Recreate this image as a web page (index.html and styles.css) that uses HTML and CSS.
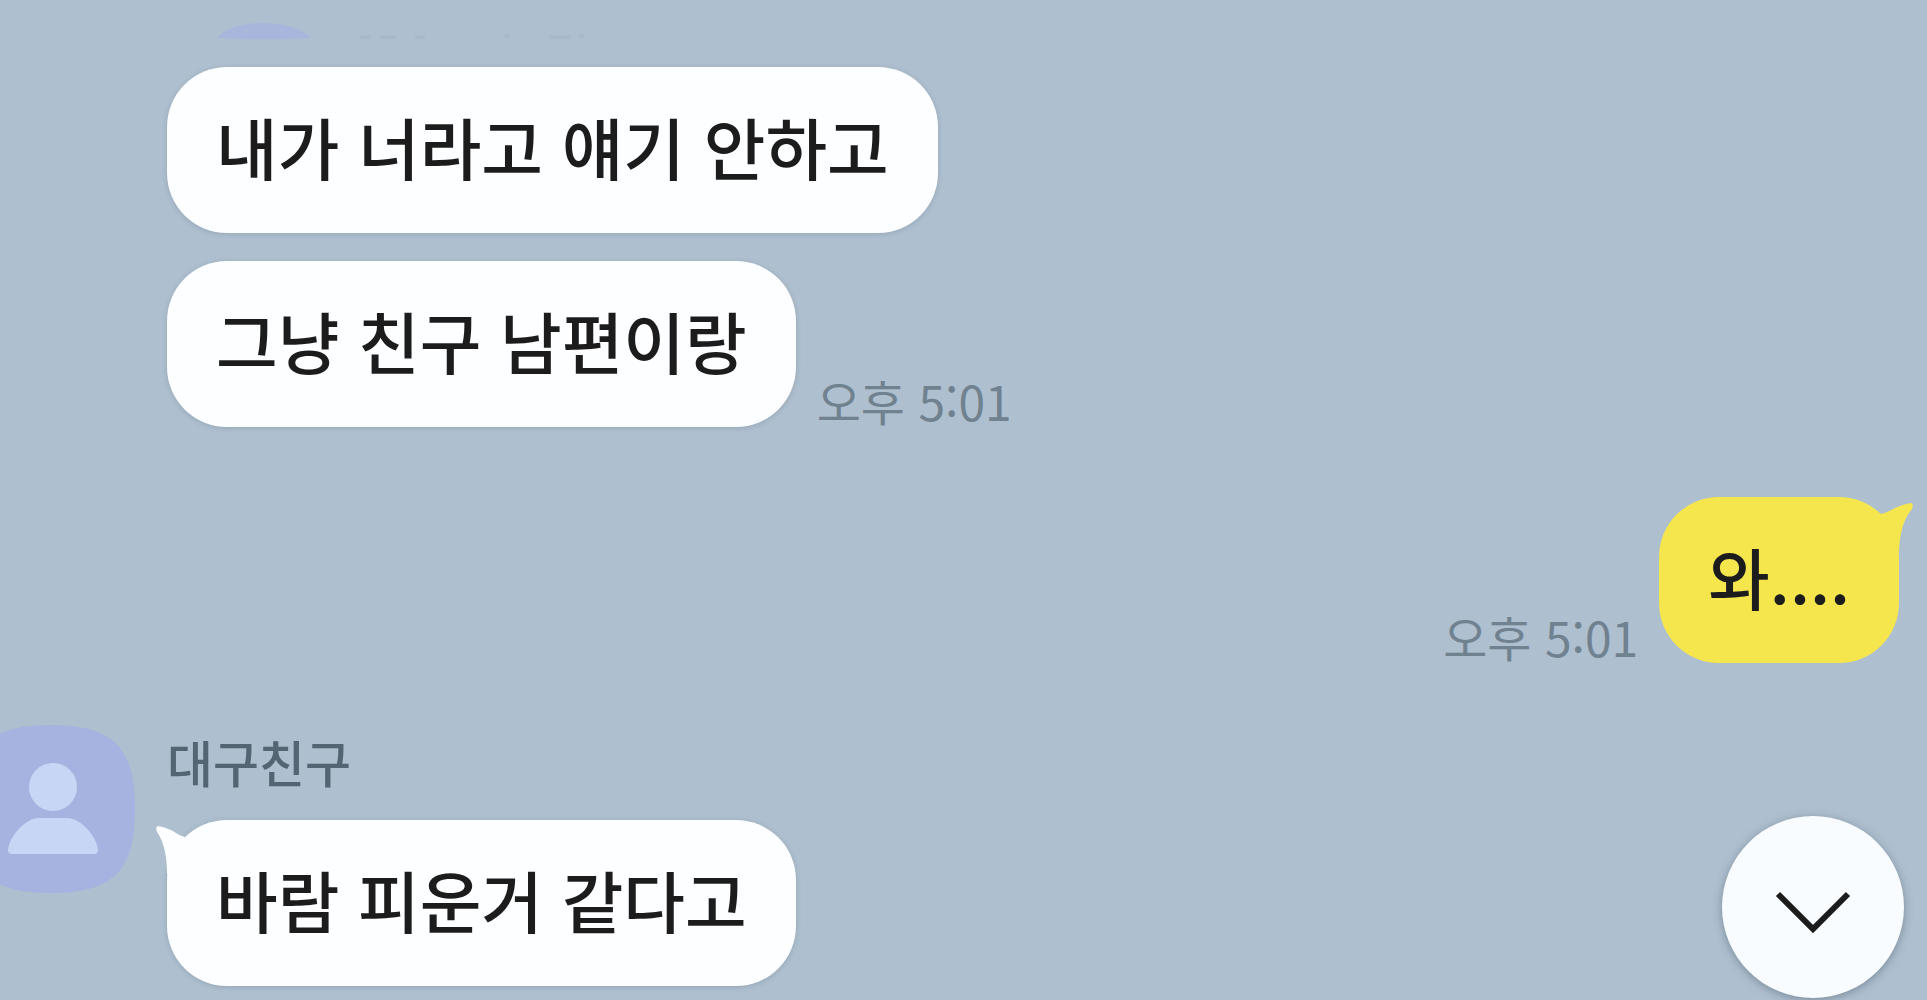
FILE: index.html
```html
<!DOCTYPE html>
<html lang="ko">
<head>
<meta charset="utf-8">
<meta name="viewport" content="width=device-width, initial-scale=1">
<title>대구친구</title>
<link rel="stylesheet" href="styles.css">
</head>
<body>
<main class="chat">
  <svg class="sticker-edge" viewBox="0 0 400 18" aria-hidden="true">
    <path d="M0 16C8 6 26 1 46 1S84 6 94 16Q46 19 0 16Z" fill="#a9b6dc"/>
    <path d="M143 15h10M163 15h16M198 15h10M288 14h5M333 15h20M362 14h5" stroke="#a3b2cb" stroke-width="3" opacity=".6"/>
  </svg>

  <section class="group incoming">
    <div class="messages">
      <div class="row"><p class="bubble">내가 너라고 얘기 안하고</p></div>
      <div class="row">
        <p class="bubble">그냥 친구 남편이랑</p>
        <time class="time" datetime="17:01">오후 5:01</time>
      </div>
    </div>
  </section>

  <section class="group outgoing">
    <div class="row">
      <time class="time" datetime="17:01">오후 5:01</time>
      <p class="bubble">와....
        <svg class="tail" viewBox="0 0 36 48" aria-hidden="true"><path d="M0 12Q10 10 18 5Q27 1 34 0Q37 1 35 6Q23 20 22 48L0 48Z"/></svg>
      </p>
    </div>
  </section>

  <section class="group incoming">
    <svg class="avatar" viewBox="0 0 168 168" role="img" aria-label="프로필">
      <path d="M84 0C146 0 168 22 168 84S146 168 84 168S0 146 0 84S22 0 84 0Z" fill="#a6b3e0"/>
      <circle cx="86" cy="62" r="24" fill="#c8d6f5"/>
      <path d="M41 125C42 112 58 93 72 93H100C114 93 130 112 131 125Q131 129 127 129H45Q41 129 41 125Z" fill="#c8d6f5"/>
    </svg>
    <div class="messages named">
      <h2 class="name">대구친구</h2>
      <div class="row">
        <p class="bubble">바람 피운거 같다고
          <svg class="tail" viewBox="0 0 36 48" aria-hidden="true"><path d="M36 12Q26 10 20 5Q12 1 5 0Q2 1 4 6Q14 20 14 48L36 48Z"/></svg>
        </p>
      </div>
    </div>
  </section>
</main>
<button class="scroll-down" type="button" aria-label="맨 아래로">
  <svg viewBox="0 0 76 44" aria-hidden="true"><path d="M3 3L38 38L73 3"/></svg>
</button>
</body>
</html>
```
FILE: styles.css
```css
* {
  box-sizing: border-box;
}

body {
  margin: 0;
  min-height: 100vh;
  overflow-x: hidden;
  background: #aebfcf;
  color: #1c1c1c;
  font-family: "Noto Sans CJK KR", sans-serif;
}

.chat {
  display: flex;
  flex-direction: column;
  padding: 22px 28px 15px 0;
}

.sticker-edge {
  width: 400px;
  height: 18px;
  margin: 0 0 27px 217px;
}

.group {
  display: flex;
}

.incoming {
  gap: 32px;
  padding-left: 167px;
}

.incoming:has(.avatar) {
  padding-left: 0;
  margin-left: -33px;
}

.outgoing {
  justify-content: flex-end;
  margin: 70px 0 62px;
}

.messages {
  display: flex;
  flex-direction: column;
  gap: 28px;
}

.named {
  gap: 23px;
}

.row {
  display: flex;
  align-items: flex-end;
  gap: 21px;
}

.bubble {
  position: relative;
  margin: 0;
  padding: 45px 49px 53px;
  border-radius: 60px;
  background: #fcfeff;
  font-size: 67px;
  font-weight: 500;
  line-height: 68px;
  box-shadow: 0 1px 5px rgb(90 110 125 / 30%);
}

.outgoing .bubble {
  background: #f5e64d;
  box-shadow: none;
}

.tail {
  position: absolute;
  top: 6px;
  left: -14px;
  width: 36px;
  height: 48px;
  fill: #fcfeff;
}

.outgoing .tail {
  right: -14px;
  left: auto;
  fill: #f5e64d;
}

.time {
  color: #70828f;
  font-size: 48px;
  line-height: 54px;
}

.name {
  margin: 0;
  color: #536572;
  font-size: 50px;
  font-weight: 500;
  line-height: 72px;
}

.avatar {
  flex: none;
  width: 168px;
  height: 168px;
}

.scroll-down {
  position: fixed;
  right: 23px;
  bottom: 2px;
  display: grid;
  place-items: center;
  width: 182px;
  height: 182px;
  padding: 12px 0 0;
  border: 0;
  border-radius: 50%;
  background: #f9fcff;
  box-shadow: 0 2px 8px rgb(70 90 105 / 50%);
}

.scroll-down svg {
  width: 76px;
  height: 44px;
  fill: none;
  stroke: #1c1c1c;
  stroke-width: 6;
}
```
